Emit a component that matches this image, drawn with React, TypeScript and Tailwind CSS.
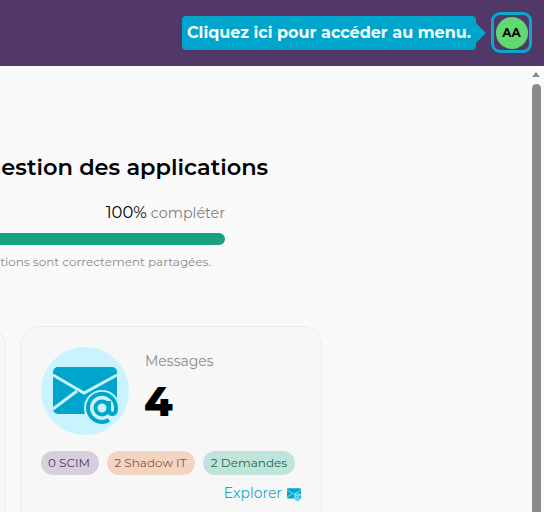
import React from "react";

function MailAt({ className }: { className?: string }) {
  return (
    <svg viewBox="0 0 64 48" className={className}>
      <rect x="0" y="0" width="64" height="47" rx="5" fill="#00a5cc" />
      <path d="M0 8 L31 26 L64 8" stroke="#c9f4ff" strokeWidth="3" fill="none" />
      <path d="M0 42 L24 24" stroke="#c9f4ff" strokeWidth="3" fill="none" />
      <circle cx="49" cy="41" r="18" fill="#c9f4ff" />
      <circle cx="49" cy="41" r="6.5" fill="none" stroke="#00a5cc" strokeWidth="4" />
      <path d="M56 34 V43 Q56 47 59.5 47 Q63 47 63 41 A14 14 0 1 0 56 53" fill="none" stroke="#00a5cc" strokeWidth="4" />
    </svg>
  );
}

export default function App() {
  return (
    <div className="flex h-[512px] w-[544px] flex-col overflow-hidden bg-[#f9f9f9] font-['Montserrat','Inter',sans-serif]">
      <header className="flex h-[66px] shrink-0 items-center justify-end gap-[5px] bg-[#523769] pr-[12px]">
        <div className="relative mr-[10px] flex h-[34px] w-[294px] items-center rounded-[4px] bg-[#00a5cc] pl-[5px]">
          <span className="whitespace-nowrap text-[16px] font-bold text-[#f4fdff]">Cliquez ici pour accéder au menu.</span>
          <span className="absolute left-[294px] top-[7px] h-0 w-0 border-y-[10px] border-l-[10px] border-y-transparent border-l-[#00a5cc]" />
        </div>
        <div className="mb-[1px] flex h-[41px] w-[41px] items-center justify-center rounded-[9px] border-[3px] border-[#0ea5cf]">
          <div className="flex h-[32px] w-[32px] items-center justify-center rounded-full bg-[#5fd970] text-[12px] font-bold text-black">AA</div>
        </div>
      </header>
      <div className="flex min-h-0 flex-1">
        <main className="min-w-0 flex-1 overflow-hidden pt-[88px]">
          <div className="ml-[-300px] w-[525px]">
            <h1 className="h-[27px] whitespace-nowrap pl-[284px] text-[22.5px] font-semibold leading-[27px] text-black">Gestion des applications</h1>
            <div className="mt-[21px] flex items-baseline justify-end gap-[4px] leading-[20px]">
              <span className="text-[16.4px] text-black">100%</span>
              <span className="text-[14.3px] text-[#808080]">compléter</span>
            </div>
            <div className="mt-[10px] h-[12px] rounded-full bg-[#18a183]" />
            <p className="mt-[9px] pr-[14px] text-right text-[12px] leading-[16px] text-[#8a8a8a]">Toutes les applications sont correctement partagées.</p>
          </div>
          <div className="ml-[-296px] mt-[56px] flex w-[618px] gap-[14px]">
            <div className="h-[230px] w-[302px] rounded-[20px] border border-[#ececec] bg-[#f7f7f7]" />
            <div className="h-[230px] w-[302px] rounded-[20px] border border-[#ececec] bg-[#f7f7f7] px-[20px] pt-[20px]">
              <div className="flex gap-[15px]">
                <div className="flex h-[88px] w-[88px] items-center justify-center rounded-full bg-[#c9f4ff]">
                  <MailAt className="h-[48px] w-[64px] overflow-visible" />
                </div>
                <div>
                  <div className="ml-[1px] text-[14px] leading-[28px] text-[#8c8c8c]">Messages</div>
                  <div className="text-[41px] font-extrabold leading-[52px] text-black">4</div>
                </div>
              </div>
              <div className="mt-[16px] flex gap-[8px] text-[12px] leading-[24px]">
                <span className="w-[58px] rounded-full bg-[#d5d0dc] pr-[2px] text-center text-[#523769]">0 SCIM</span>
                <span className="w-[88px] rounded-full bg-[#f2d4c2] pr-[1px] text-center text-[#a0522d]">2 Shadow IT</span>
                <span className="w-[92px] rounded-full bg-[#c0e3da] text-center text-[#1a6b58]">2 Demandes</span>
              </div>
              <div className="mt-[8px] flex items-center justify-end gap-[5px] text-[14px] leading-[20px] text-[#1fa6cc]">
                <span>Explorer</span>
                <MailAt className="h-[11px] w-[14px] overflow-visible" />
              </div>
            </div>
          </div>
        </main>
        <div className="flex w-[12px] shrink-0 flex-col items-start bg-[#fbfbfb] pt-[6px]">
          <span className="h-0 w-0 border-x-[4.5px] border-b-[5px] border-x-transparent border-b-[#8b8b8b]" />
          <span className="mt-[7px] h-[440px] w-[9px] shrink-0 rounded-t-full bg-[#8b8b8b]" />
        </div>
      </div>
    </div>
  );
}
